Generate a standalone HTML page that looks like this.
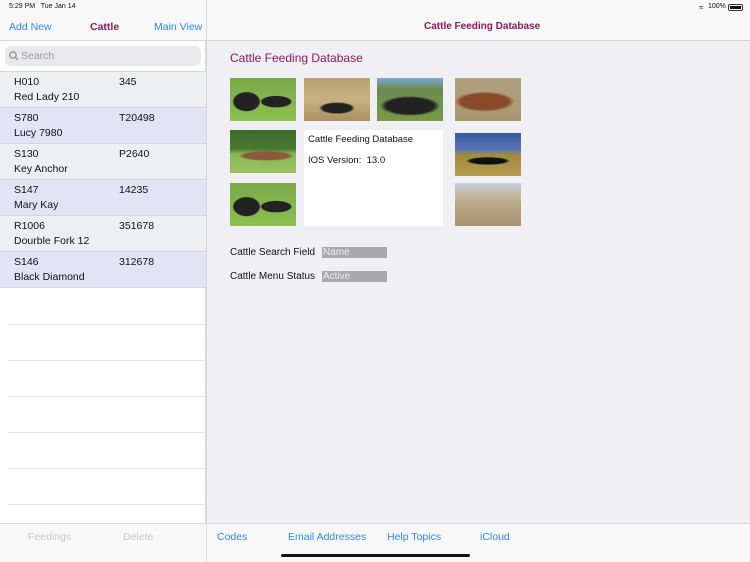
<!DOCTYPE html>
<html><head><style>
*{margin:0;padding:0;box-sizing:border-box}
body{width:750px;height:562px;overflow:hidden;font-family:"Liberation Sans",sans-serif;background:#efeff4;position:relative;font-size:10px}
.a{position:absolute}
.left{left:0;top:0;width:206px;height:562px;background:#fff;border-right:1px solid #d8d8dc}
.blue{color:#2f88ea}
.row{position:absolute;left:0;width:206px;height:36px;border-bottom:1px solid #d6d6da}
.row span{position:absolute;font-size:10.5px;color:#111}
.img{position:absolute;width:66px;height:43px}
.sep{position:absolute;left:8px;width:198px;height:1px;background:#e2e2e6}
</style></head><body>
<div class="a left"></div>
<div class="a" style="left:0;top:0;width:750px;height:41px;background:#f8f8f9;border-bottom:1px solid #d8d8dc"></div>
<div class="a" style="left:206px;top:0;width:1px;height:562px;background:#d8d8dc"></div>
<div class="a" style="left:9px;top:3px;font-size:7px;color:#111">5:29 PM&nbsp;&nbsp; Tue Jan 14</div>
<div class="a" style="left:708px;top:3px;font-size:7px;color:#111">100%</div>
<div class="a" style="left:728px;top:4px;width:15px;height:7px;border:1px solid #333;border-radius:2px;padding:1px"><div style="width:100%;height:100%;background:#111"></div></div>
<div class="a" style="left:699px;top:3px;font-size:8px">&#8776;</div>
<div class="a blue" style="left:9px;top:21px;font-size:10.5px">Add New</div>
<div class="a" style="left:90px;top:21px;font-size:10.5px;font-weight:bold;color:#8b1a5a">Cattle</div>
<div class="a blue" style="left:154px;top:21px;font-size:10.5px">Main View</div>
<div class="a" style="left:424px;top:21px;font-size:10px;font-weight:bold;color:#8b1a5a">Cattle Feeding Database</div>
<div class="a" style="left:5px;top:46px;width:196px;height:20px;background:#e9e9ec;border-radius:6px"></div>
<svg class="a" style="left:9px;top:51px" width="10" height="10"><circle cx="4" cy="4" r="3.2" fill="none" stroke="#888" stroke-width="1.2"/><line x1="6.4" y1="6.4" x2="9" y2="9" stroke="#888" stroke-width="1.2"/></svg>
<div class="a" style="left:21px;top:50px;font-size:10.5px;color:#999">Search</div>
<div class="a" style="left:0;top:71px;width:206px;height:1px;background:#d6d6da"></div>
<div class="row" style="top:72px;background:#eeeff3"><span style="left:14px;top:4px">H010</span><span style="left:119px;top:4px">345</span><span style="left:14px;top:19px">Red Lady 210</span></div>
<div class="row" style="top:108px;background:#e0e4f5"><span style="left:14px;top:4px">S780</span><span style="left:119px;top:4px">T20498</span><span style="left:14px;top:19px">Lucy 7980</span></div>
<div class="row" style="top:144px;background:#eeeff3"><span style="left:14px;top:4px">S130</span><span style="left:119px;top:4px">P2640</span><span style="left:14px;top:19px">Key Anchor</span></div>
<div class="row" style="top:180px;background:#e0e4f5"><span style="left:14px;top:4px">S147</span><span style="left:119px;top:4px">14235</span><span style="left:14px;top:19px">Mary Kay</span></div>
<div class="row" style="top:216px;background:#eeeff3"><span style="left:14px;top:4px">R1006</span><span style="left:119px;top:4px">351678</span><span style="left:14px;top:19px">Dourble Fork 12</span></div>
<div class="row" style="top:252px;background:#e0e4f5"><span style="left:14px;top:4px">S146</span><span style="left:119px;top:4px">312678</span><span style="left:14px;top:19px">Black Diamond</span></div>
<div class="sep" style="top:324px"></div><div class="sep" style="top:360px"></div><div class="sep" style="top:396px"></div><div class="sep" style="top:432px"></div><div class="sep" style="top:468px"></div><div class="sep" style="top:504px"></div>
<div class="a" style="left:0;top:523px;width:750px;height:39px;background:#f8f8f9;border-top:1px solid #d8d8dc"></div>
<div class="a" style="left:206px;top:523px;width:1px;height:39px;background:#e0e0e4"></div>
<div class="a" style="left:28px;top:531px;color:#c8c8cc;font-size:10.5px">Feedings</div>
<div class="a" style="left:123px;top:531px;color:#c8c8cc;font-size:10.5px">Delete</div>
<div class="a blue" style="left:217px;top:531px;font-size:10.5px">Codes</div>
<div class="a blue" style="left:288px;top:531px;font-size:10.5px">Email Addresses</div>
<div class="a blue" style="left:387px;top:531px;font-size:10.5px">Help Topics</div>
<div class="a blue" style="left:480px;top:531px;font-size:10.5px">iCloud</div>
<div class="a" style="left:281px;top:554px;width:189px;height:3px;background:#111;border-radius:2px"></div>
<div class="a" style="left:230px;top:51px;font-size:12px;color:#8b1a5a">Cattle Feeding Database</div>
<div class="img" style="left:230px;top:78px;background:radial-gradient(ellipse 14px 10px at 25% 55%,#222 90%,transparent),radial-gradient(ellipse 16px 6px at 70% 55%,#222 90%,transparent),linear-gradient(#7aa848,#8cc050)"></div>
<div class="img" style="left:304px;top:78px;background:radial-gradient(ellipse 18px 6px at 50% 70%,#222 80%,transparent),linear-gradient(#b8a070,#c8b080 50%,#a89060)"></div>
<div class="img" style="left:377px;top:78px;background:radial-gradient(ellipse 30px 10px at 50% 65%,#222 80%,transparent),linear-gradient(#7fa8d8 0%,#6a8a50 25%,#7a9a48 100%)"></div>
<div class="img" style="left:455px;top:78px;background:radial-gradient(ellipse 30px 10px at 45% 55%,#8a4a2a 80%,transparent),linear-gradient(#b0a080,#a89870)"></div>
<div class="img" style="left:230px;top:130px;background:radial-gradient(ellipse 28px 5px at 55% 60%,#8a5a3a 80%,transparent),linear-gradient(#3a6a2a 0%,#4a7a30 45%,#8ab858 55%,#9ac060)"></div>
<div class="img" style="left:230px;top:183px;background:radial-gradient(ellipse 14px 10px at 25% 55%,#222 90%,transparent),radial-gradient(ellipse 16px 6px at 70% 55%,#222 90%,transparent),linear-gradient(#7aa848,#8cc050)"></div>
<div class="img" style="left:455px;top:133px;background:radial-gradient(ellipse 22px 4px at 50% 65%,#111 80%,transparent),linear-gradient(#3a5aa0 0%,#5a78b8 40%,#a08a40 50%,#b89a50)"></div>
<div class="img" style="left:455px;top:183px;background:linear-gradient(#c8d0e0 0%,#c0b090 35%,#a89070 100%)"></div>
<div class="a" style="left:304px;top:130px;width:139px;height:96px;background:#fff"></div>
<div class="a" style="left:308px;top:134px;font-size:9.5px;color:#111">Cattle Feeding Database</div>
<div class="a" style="left:308px;top:155px;font-size:9.5px;color:#111">IOS Version:&nbsp; 13.0</div>
<div class="a" style="left:230px;top:247px;font-size:10px;color:#111">Cattle Search Field</div>
<div class="a" style="left:230px;top:271px;font-size:10px;color:#111">Cattle Menu Status</div>
<div class="a" style="left:322px;top:247px;width:65px;height:11px;background:#a9a9a9;color:#eee;font-size:10px;padding-left:1px;line-height:11px">Name</div>
<div class="a" style="left:322px;top:271px;width:65px;height:11px;background:#a9a9a9;color:#eee;font-size:10px;padding-left:1px;line-height:11px">Active</div>
</body></html>
